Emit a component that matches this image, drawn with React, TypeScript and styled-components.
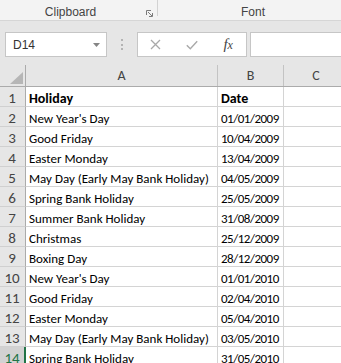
import React from "react";
import styled, { createGlobalStyle } from "styled-components";

const Global = createGlobalStyle`
  html, body { margin: 0; padding: 0; background: #ffffff; }
  body { width: 341px; height: 363px; overflow: hidden; }
`;

const Window = styled.div`
  width: 341px;
  height: 363px;
  overflow: hidden;
  display: flex;
  flex-direction: column;
  background: #ffffff;
`;

/* ---------- Ribbon group labels ---------- */
const Ribbon = styled.div`
  display: flex;
  flex-shrink: 0;
  height: 20px;
  background: #f3f3f3;
  border-bottom: 1px solid #d6d6d6;
`;

const RibbonGroup = styled.div<{ $w: number }>`
  display: flex;
  flex-shrink: 0;
  width: ${(p) => p.$w}px;
`;

const GroupLabel = styled.div`
  flex: 1;
  height: 20px;
  box-sizing: border-box;
  padding-top: 4px;
  line-height: 16px;
  text-align: center;
  font-family: "Liberation Sans", Arial, sans-serif;
  font-size: 12px;
  color: #444444;
  white-space: nowrap;
`;

const Launcher = styled.div`
  width: 16px;
  display: flex;
  padding: 10px 0 0 5px;
  box-sizing: border-box;
`;

const GroupSeparator = styled.div`
  width: 1px;
  height: 16px;
  background: #d2d2d2;
  flex-shrink: 0;
`;

/* ---------- Formula bar ---------- */
const FormulaArea = styled.div`
  display: flex;
  align-items: flex-start;
  flex-shrink: 0;
  height: 44px;
  box-sizing: border-box;
  padding: 11px 0 0 5px;
  background: #e6e6e6;
`;

const NameBox = styled.div`
  display: flex;
  align-items: center;
  justify-content: space-between;
  flex-shrink: 0;
  width: 102px;
  height: 25px;
  box-sizing: border-box;
  padding: 0 6px 0 7px;
  background: #ffffff;
  border: 1px solid #c6c6c6;
  font-family: "Liberation Sans", Arial, sans-serif;
  font-size: 12px;
  color: #333333;
`;

const Grip = styled.div`
  display: flex;
  flex-direction: column;
  align-items: center;
  gap: 2.5px;
  flex-shrink: 0;
  width: 30px;
  padding-top: 7px;
`;

const GripDot = styled.span`
  width: 2px;
  height: 2px;
  background: #b3b3b3;
`;

const FxBox = styled.div`
  display: flex;
  flex-shrink: 0;
  width: 110px;
  height: 25px;
  box-sizing: border-box;
  background: #ffffff;
  border: 1px solid #c6c6c6;
`;

const FxSlot = styled.div<{ $w: number }>`
  display: flex;
  align-items: center;
  justify-content: center;
  width: ${(p) => p.$w}px;
  height: 100%;
`;

const FxLabel = styled.span`
  font-family: "Liberation Serif", "Times New Roman", serif;
  font-style: italic;
  font-size: 15px;
  color: #444444;
  line-height: 1;
  letter-spacing: -0.3px;
`;

const FxSub = styled.span`
  font-size: 12px;
`;

const FormulaInput = styled.div`
  flex-shrink: 0;
  width: 120px;
  height: 25px;
  margin-left: 3px;
  box-sizing: border-box;
  background: #ffffff;
  border: 1px solid #c6c6c6;
`;

/* ---------- Grid ---------- */
const Sheet = styled.div`
  display: flex;
  flex-direction: column;
  flex: 1;
`;

const HeaderRow = styled.div`
  display: flex;
  flex-shrink: 0;
  height: 22px;
  box-sizing: border-box;
  background: #e6e6e6;
  border-bottom: 1px solid #ababab;
`;

const Corner = styled.div`
  display: flex;
  align-items: flex-end;
  justify-content: flex-end;
  flex-shrink: 0;
  width: 26px;
  box-sizing: border-box;
  padding: 0 2px 2px 0;
  border-right: 1px solid #ababab;
`;

const ColHead = styled.div<{ $w: number }>`
  flex-shrink: 0;
  width: ${(p) => p.$w}px;
  box-sizing: border-box;
  border-right: 1px solid #c3c3c3;
  text-align: center;
  line-height: 21px;
  font-family: Carlito, Calibri, "Liberation Sans", sans-serif;
  font-size: 14px;
  color: #444444;
`;

const Row = styled.div`
  display: flex;
  flex-shrink: 0;
  height: 20px;
`;

const RowHead = styled.div<{ $active?: boolean }>`
  flex-shrink: 0;
  width: 26px;
  box-sizing: border-box;
  background: ${(p) => (p.$active ? "#d2d2d2" : "#e6e6e6")};
  border-right: ${(p) => (p.$active ? "2px solid #217346" : "1px solid #ababab")};
  border-bottom: 1px solid #d0d0d0;
  text-align: center;
  padding: 3px ${(p) => (p.$active ? "0" : "1px")} 0 0;
  line-height: 16px;
  font-family: Carlito, Calibri, "Liberation Sans", sans-serif;
  font-size: 15px;
  color: ${(p) => (p.$active ? "#217346" : "#444444")};
`;

const Cell = styled.div<{ $w: number; $bold?: boolean; $date?: boolean }>`
  flex-shrink: 0;
  width: ${(p) => p.$w}px;
  box-sizing: border-box;
  overflow: hidden;
  white-space: nowrap;
  padding: 4px 0 0 3px;
  line-height: 15px;
  border-right: 1px solid #d4d4d4;
  border-bottom: 1px solid #d4d4d4;
  font-family: Carlito, Calibri, "Liberation Sans", sans-serif;
  font-size: ${(p) => (p.$bold ? "14px" : "13px")};
  font-weight: ${(p) => (p.$bold ? 700 : 400)};
  letter-spacing: ${(p) => (p.$date ? "-0.5px" : "0")};
  color: #000000;
`;

const COLS = { A: 192, B: 66, C: 65 };

const data: [string, string][] = [
  ["New Year's Day", "01/01/2009"],
  ["Good Friday", "10/04/2009"],
  ["Easter Monday", "13/04/2009"],
  ["May Day (Early May Bank Holiday)", "04/05/2009"],
  ["Spring Bank Holiday", "25/05/2009"],
  ["Summer Bank Holiday", "31/08/2009"],
  ["Christmas", "25/12/2009"],
  ["Boxing Day", "28/12/2009"],
  ["New Year's Day", "01/01/2010"],
  ["Good Friday", "02/04/2010"],
  ["Easter Monday", "05/04/2010"],
  ["May Day (Early May Bank Holiday)", "03/05/2010"],
  ["Spring Bank Holiday", "31/05/2010"],
];

const LauncherIcon = () => (
  <svg width="7" height="7" viewBox="0 0 7 7" fill="none" stroke="#7a7a7a" strokeWidth="1">
    <path d="M0.5 5 V0.5 H5" />
    <path d="M2 2 L6 6" />
    <path d="M6.5 3 V6.5 H3" />
  </svg>
);

const Caret = () => (
  <svg width="7" height="4" viewBox="0 0 7 4">
    <polygon points="0,0 7,0 3.5,4" fill="#858585" />
  </svg>
);

const CancelIcon = () => (
  <svg width="11" height="11" viewBox="0 0 11 11" stroke="#a9a9a9" strokeWidth="1.3" fill="none">
    <path d="M1 1 L10 10 M10 1 L1 10" />
  </svg>
);

const CheckIcon = () => (
  <svg width="12" height="10" viewBox="0 0 12 10" stroke="#a9a9a9" strokeWidth="1.4" fill="none">
    <path d="M0.8 5.2 L4.3 8.7 L11.2 1.2" />
  </svg>
);

const SelectAll = () => (
  <svg width="13" height="12" viewBox="0 0 13 12">
    <polygon points="13,0 13,12 0,12" fill="#b6b6b6" />
  </svg>
);

export default function App() {
  return (
    <Window>
      <Global />
      <Ribbon>
        <RibbonGroup $w={157}>
          <GroupLabel>Clipboard</GroupLabel>
          <Launcher>
            <LauncherIcon />
          </Launcher>
        </RibbonGroup>
        <GroupSeparator />
        <RibbonGroup $w={190}>
          <GroupLabel>Font</GroupLabel>
        </RibbonGroup>
      </Ribbon>

      <FormulaArea>
        <NameBox>
          <span>D14</span>
          <Caret />
        </NameBox>
        <Grip>
          <GripDot />
          <GripDot />
          <GripDot />
        </Grip>
        <FxBox>
          <FxSlot $w={35}>
            <CancelIcon />
          </FxSlot>
          <FxSlot $w={37}>
            <CheckIcon />
          </FxSlot>
          <FxSlot $w={36}>
            <FxLabel>
              f<FxSub>x</FxSub>
            </FxLabel>
          </FxSlot>
        </FxBox>
        <FormulaInput />
      </FormulaArea>

      <Sheet>
        <HeaderRow>
          <Corner>
            <SelectAll />
          </Corner>
          <ColHead $w={COLS.A}>A</ColHead>
          <ColHead $w={COLS.B}>B</ColHead>
          <ColHead $w={COLS.C}>C</ColHead>
        </HeaderRow>
        <Row>
          <RowHead>1</RowHead>
          <Cell $w={COLS.A} $bold>
            Holiday
          </Cell>
          <Cell $w={COLS.B} $bold>
            Date
          </Cell>
          <Cell $w={COLS.C} />
        </Row>
        {data.map(([name, date], i) => (
          <Row key={i}>
            <RowHead $active={i + 2 === 14}>{i + 2}</RowHead>
            <Cell $w={COLS.A}>{name}</Cell>
            <Cell $w={COLS.B} $date>
              {date}
            </Cell>
            <Cell $w={COLS.C} />
          </Row>
        ))}
      </Sheet>
    </Window>
  );
}
